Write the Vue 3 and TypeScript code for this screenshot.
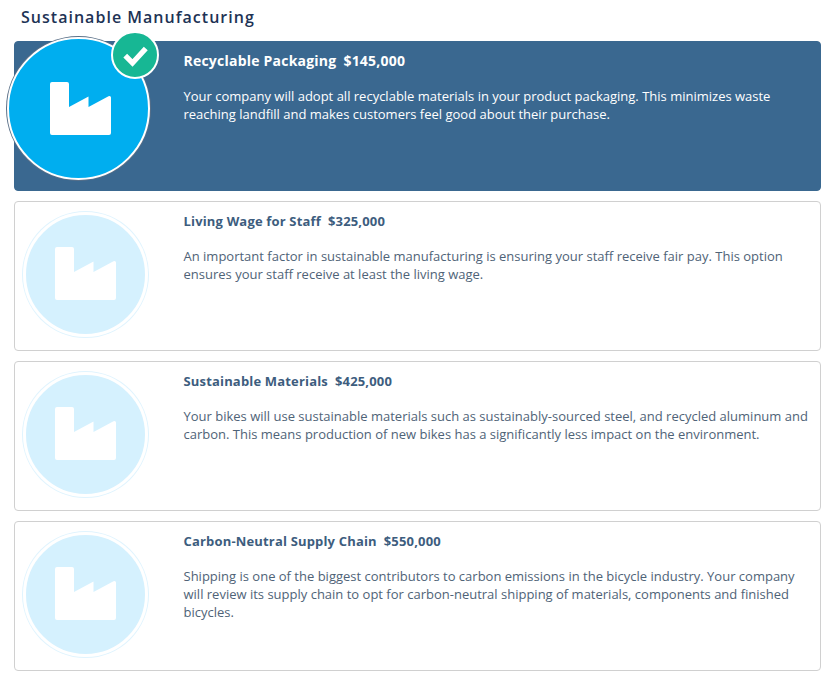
<script setup lang="ts">
interface Option {
  title: string
  price: string
  text: string
  selected?: boolean
}
const options: Option[] = [
  {
    title: 'Recyclable Packaging',
    price: '$145,000',
    text: 'Your company will adopt all recyclable materials in your product packaging. This minimizes waste reaching landfill and makes customers feel good about their purchase.',
    selected: true,
  },
  {
    title: 'Living Wage for Staff',
    price: '$325,000',
    text: 'An important factor in sustainable manufacturing is ensuring your staff receive fair pay. This option ensures your staff receive at least the living wage.',
  },
  {
    title: 'Sustainable Materials',
    price: '$425,000',
    text: 'Your bikes will use sustainable materials such as sustainably-sourced steel, and recycled aluminum and carbon. This means production of new bikes has a significantly less impact on the environment.',
  },
  {
    title: 'Carbon-Neutral Supply Chain',
    price: '$550,000',
    text: 'Shipping is one of the biggest contributors to carbon emissions in the bicycle industry. Your company will review its supply chain to opt for carbon-neutral shipping of materials, components and finished bicycles.',
  },
]
</script>

<template>
  <div class="page">
    <h1 class="heading">Sustainable Manufacturing</h1>
    <div class="list">
      <div v-for="o in options" :key="o.title" class="card" :class="{ selected: o.selected }">
        <div class="media">
          <div class="circle">
            <svg class="factory" viewBox="0 0 61 53" aria-hidden="true">
              <path
                d="M2 0H17A2 2 0 0 1 19 2V25L38.5 14.5V25L58.5 14.2A1.7 1.7 0 0 1 61 15.7V51A2 2 0 0 1 59 53H2A2 2 0 0 1 0 51V2A2 2 0 0 1 2 0Z"
                fill="#fff"
              />
            </svg>
            <div v-if="o.selected" class="badge">
              <svg class="check" viewBox="0 0 24 24" width="29" height="29" aria-hidden="true">
                <path d="M3.5 13L9.5 19L20.5 7" fill="none" stroke="#fff" stroke-width="4.4" />
              </svg>
            </div>
          </div>
        </div>
        <div class="body">
          <div class="title"><span>{{ o.title }}</span><span class="price">{{ o.price }}</span></div>
          <p class="text">{{ o.text }}</p>
        </div>
      </div>
    </div>
  </div>
</template>

<style>
html, body { background: #fff; }
</style>

<style scoped>
.page {
  width: 833px;
  height: 678px;
  box-sizing: border-box;
  padding: 5px 12px 0 14px;
  font-family: "Open Sans", "Liberation Sans", sans-serif;
  overflow: hidden;
}
.heading {
  margin: 0 0 11px 7px;
  height: 25px;
  font-size: 16px;
  line-height: 25px;
  font-weight: 600;
  letter-spacing: 1.02px;
  color: #1d3355;
}
.list {
  display: flex;
  flex-direction: column;
  gap: 10px;
}
.card {
  display: flex;
  height: 150px;
  box-sizing: border-box;
  border: 1px solid #d0d0d0;
  border-radius: 4px;
  background: #fff;
  color: #4f6377;
}
.card.selected {
  border-color: #3a6890;
  background: #3a6890;
  color: #fff;
}
.media {
  flex: 0 0 168.5px;
}
.circle {
  position: relative;
  display: flex;
  align-items: center;
  justify-content: center;
  width: 125px;
  height: 125px;
  box-sizing: border-box;
  margin: 10px 0 0 7.5px;
  border: 3px solid #fff;
  border-radius: 50%;
  background: #d5f1fe;
  box-shadow: 0 0 0 1px #e0f4fe;
}
.selected .circle {
  width: 143px;
  height: 143px;
  margin: -5px 0 0 -8px;
  border-width: 2px;
  background: #00aeef;
  box-shadow: 0 0 0 1px #5a7088;
}
.factory {
  width: 61px;
  height: 53px;
  margin: -2px 0 0 0;
}
.selected .factory {
  margin: -1px 0 0 4px;
}
.badge {
  position: absolute;
  top: -8px;
  right: -11px;
  display: flex;
  align-items: center;
  justify-content: center;
  width: 48px;
  height: 48px;
  box-sizing: border-box;
  border: 2px solid #fff;
  border-radius: 50%;
  background: #17b794;
}
.check {
  margin-top: -2px;
}
.body {
  flex: 1;
  min-width: 0;
  padding: 10px 10px 0 0;
}
.title {
  display: flex;
  gap: 7px;
  font-size: 13px;
  line-height: 18px;
  font-weight: 700;
  letter-spacing: 0.17px;
  color: #3d5d7e;
}
.selected .title {
  gap: 7px;
  font-size: 14px;
  letter-spacing: 0.22px;
  color: #fff;
}
.text {
  margin: 17px 0 0;
  font-size: 13px;
  line-height: 18px;
}
</style>
